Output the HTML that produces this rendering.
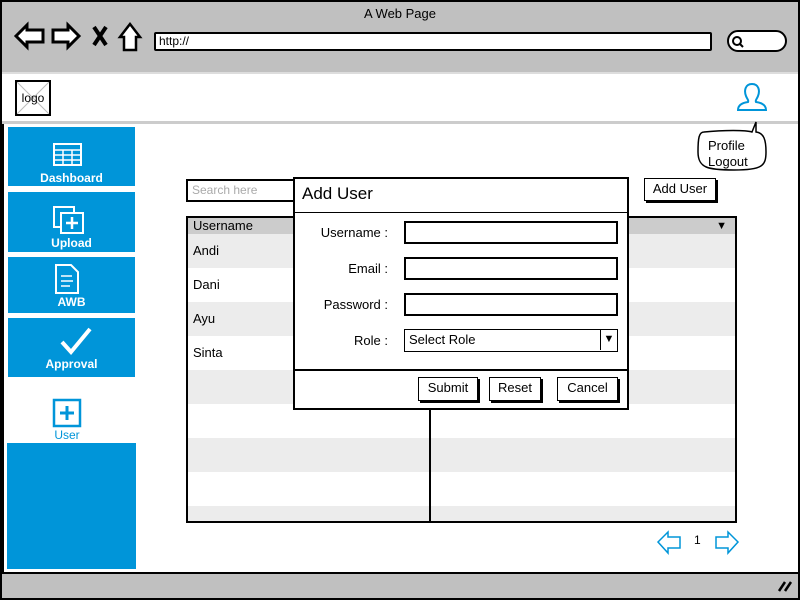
<!DOCTYPE html>
<html><head><meta charset="utf-8"><style>
*{box-sizing:border-box;margin:0;padding:0}
body{width:800px;height:600px;position:relative;overflow:hidden;background:#fff;font-family:"Comic Sans MS","Liberation Sans",sans-serif;font-size:13px;color:#000}
.a{position:absolute}
.blue{background:#0095d9;color:#fff;text-align:center;font-weight:bold;font-size:12px}
.inp{border:2px solid #000;background:#fff}
.btn{border:1.5px solid #000;box-shadow:2px 2px 0 #000;background:#fff;text-align:center;font-size:13px;line-height:20px}
</style></head><body>
<div class="a" style="left:0;top:0;width:800px;height:600px;border:2px solid #000"></div>
<div class="a" style="left:2px;top:2px;width:796px;height:70px;background:#c0c0c0"></div>
<div class="a" style="left:0;top:6px;width:800px;text-align:center;font-size:13px">A Web Page</div>
<svg class="a" style="left:14px;top:21px" width="135" height="32" viewBox="0 0 135 32">
<path d="M2 15 L13 4 L13 9 L29 9 L29 21 L13 21 L13 26 Z" fill="#fff" stroke="#000" stroke-width="3"/>
<path d="M65 15 L54 4 L54 9 L39 9 L39 21 L54 21 L54 26 Z" fill="#fff" stroke="#000" stroke-width="3"/>
<path d="M80 6 L92 24 M92 6 L80 24" stroke="#000" stroke-width="4"/>
<path d="M116 3 L106 16 L110 16 L110 29 L122 29 L122 16 L126 16 Z" fill="#fff" stroke="#000" stroke-width="2.5"/>
</svg>
<div class="a inp" style="left:154px;top:32px;width:558px;height:19px;font-size:12px;padding-left:3px;line-height:14px;border-radius:2px">http://</div>
<div class="a inp" style="left:727px;top:30px;width:60px;height:22px;border-radius:11px"></div>
<svg class="a" style="left:731px;top:35px" width="14" height="14"><circle cx="6" cy="6" r="4" fill="none" stroke="#000" stroke-width="2"/><path d="M9 9 L12 12" stroke="#000" stroke-width="2"/></svg>
<div class="a" style="left:2px;top:72px;width:796px;height:52px;border-top:2px solid #ddd;border-bottom:3px solid #ccc"></div>
<div class="a" style="left:15px;top:80px;width:36px;height:36px;border:2px solid #000;background:#fff;font-size:12px;text-align:center;line-height:32px">
<svg class="a" style="left:0;top:0" width="32" height="32"><path d="M0 0L32 32M32 0L0 32" stroke="#bbb"/></svg><span style="position:relative">logo</span></div>
<svg class="a" style="left:735px;top:82px" width="34" height="30"><path d="M17 2 C10 2 9 9 11 14 C12 17 14 18 13 20 C6 21 3 24 3 28 L31 28 C31 24 28 21 21 20 C20 18 22 17 23 14 C25 9 24 2 17 2Z" fill="none" stroke="#0095d9" stroke-width="2"/></svg>
<div class="a" style="left:2px;top:124px;width:2px;height:448px;background:#000"></div>
<div class="a blue" style="left:8px;top:127px;width:127px;height:59px;padding-top:44px">Dashboard</div>
<svg class="a" style="left:52px;top:142px" width="32" height="26"><rect x="2" y="2" width="27" height="21" fill="none" stroke="#fff" stroke-width="2"/><path d="M2 8H29M2 13H29M2 18H29M11 8V23M20 8V23" stroke="#fff" stroke-width="1.5"/></svg>
<div class="a blue" style="left:8px;top:192px;width:127px;height:60px;padding-top:44px">Upload</div>
<svg class="a" style="left:52px;top:205px" width="34" height="30"><rect x="2" y="2" width="20" height="20" fill="#0095d9" stroke="#fff" stroke-width="2"/><rect x="9" y="8" width="22" height="20" fill="#0095d9" stroke="#fff" stroke-width="2"/><path d="M20 12V24M14 18H26" stroke="#fff" stroke-width="2.5"/></svg>
<div class="a blue" style="left:8px;top:257px;width:127px;height:56px;padding-top:38px">AWB</div>
<svg class="a" style="left:54px;top:263px" width="26" height="32"><path d="M2 2H17L24 9V30H2Z" fill="none" stroke="#fff" stroke-width="2"/><path d="M7 13H18M7 18H19M7 23H16" stroke="#fff" stroke-width="1.5"/></svg>
<div class="a blue" style="left:8px;top:318px;width:127px;height:59px;padding-top:39px">Approval</div>
<svg class="a" style="left:58px;top:326px" width="36" height="30"><path d="M4 16L13 26L32 3" fill="none" stroke="#fff" stroke-width="4"/></svg>
<svg class="a" style="left:52px;top:398px" width="30" height="30"><rect x="2" y="2" width="26" height="26" fill="#fff" stroke="#0095d9" stroke-width="2.5"/><path d="M15 8V22M8 15H22" stroke="#0095d9" stroke-width="3"/></svg>
<div class="a" style="left:8px;top:428px;width:118px;text-align:center;color:#0095d9;font-size:12px">User</div>
<div class="a" style="left:7px;top:443px;width:129px;height:126px;background:#0095d9"></div>
<svg class="a" style="left:694px;top:120px" width="76" height="56"><path d="M10 12 C30 10 52 10 58 12 L62 2 L62 12 C70 13 72 20 72 32 C72 46 68 50 40 50 C14 50 4 48 4 32 C4 18 5 12 10 12Z" fill="#fff" stroke="#000" stroke-width="1.5"/></svg>
<div class="a" style="left:708px;top:138px;font-size:13px;line-height:16px">Profile<br>Logout</div>
<div class="a inp" style="left:186px;top:179px;width:110px;height:23px;color:#aaa;font-size:12px;padding-left:4px;line-height:19px">Search here</div>
<div class="a btn" style="left:644px;top:178px;width:72px;height:23px">Add User</div>
<div class="a" style="left:186px;top:216px;width:551px;height:307px;border:2px solid #000;overflow:hidden">
<div style="height:16px;background:#ccc;padding-left:5px;line-height:16px;font-size:13px">Username<span style="float:right;margin-right:8px;font-size:11px">▼</span></div>
<div style="height:34px;background:#ececec;padding:9px 5px">Andi</div>
<div style="height:34px;background:#fff;padding:9px 5px">Dani</div>
<div style="height:34px;background:#ececec;padding:9px 5px">Ayu</div>
<div style="height:34px;background:#fff;padding:9px 5px">Sinta</div>
<div style="height:34px;background:#ececec"></div>
<div style="height:34px;background:#fff"></div>
<div style="height:34px;background:#ececec"></div>
<div style="height:34px;background:#fff"></div>
<div style="height:34px;background:#ececec"></div>
<div class="a" style="left:241px;top:0;width:1.5px;height:310px;background:#000"></div>
</div>
<div class="a" style="left:293px;top:177px;width:336px;height:233px;border:2px solid #000;background:#fff">
<div style="height:34px;border-bottom:1.5px solid #000;font-size:17px;padding:5px 7px">Add User</div>
<div class="a" style="left:0;top:190px;width:332px;height:1.5px;background:#000"></div>
</div>
<div class="a" style="left:300px;top:225px;width:88px;text-align:right">Username :</div>
<div class="a" style="left:300px;top:261px;width:88px;text-align:right">Email :</div>
<div class="a" style="left:300px;top:297px;width:88px;text-align:right">Password :</div>
<div class="a" style="left:300px;top:333px;width:88px;text-align:right">Role :</div>
<div class="a inp" style="left:404px;top:221px;width:214px;height:23px"></div>
<div class="a inp" style="left:404px;top:257px;width:214px;height:23px"></div>
<div class="a inp" style="left:404px;top:293px;width:214px;height:23px"></div>
<div class="a" style="left:404px;top:329px;width:214px;height:23px;border:1.5px solid #000;padding-left:4px;line-height:19px">Select Role<span style="position:absolute;right:0;top:0;width:17px;height:20px;border-left:1.5px solid #000;font-size:11px;text-align:center">▼</span></div>
<div class="a btn" style="left:418px;top:377px;width:60px;height:24px">Submit</div>
<div class="a btn" style="left:489px;top:377px;width:52px;height:24px">Reset</div>
<div class="a btn" style="left:557px;top:377px;width:61px;height:24px">Cancel</div>
<svg class="a" style="left:656px;top:529px" width="86" height="26"><path d="M2 13L12 3V8H24V19H12V24Z" fill="none" stroke="#0095d9" stroke-width="1.5"/><path d="M82 13L72 3V8H60V19H72V24Z" fill="none" stroke="#0095d9" stroke-width="1.5"/></svg>
<div class="a" style="left:694px;top:533px;font-size:12px">1</div>
<div class="a" style="left:2px;top:572px;width:796px;height:26px;background:#c0c0c0;border-top:2px solid #000"></div>
<svg class="a" style="left:776px;top:578px" width="20" height="16"><path d="M3 13L9 4M9 13L15 4" stroke="#000" stroke-width="2.5"/></svg>
</body></html>
